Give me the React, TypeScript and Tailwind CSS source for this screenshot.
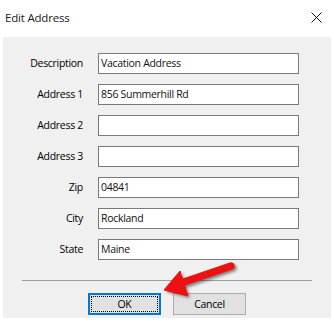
import React from "react";

const fields = [
  { label: "Description", value: "Vacation Address" },
  { label: "Address 1", value: "856 Summerhill Rd" },
  { label: "Address 2", value: "" },
  { label: "Address 3", value: "" },
  { label: "Zip", value: "04841" },
  { label: "City", value: "Rockland" },
  { label: "State", value: "Maine" },
];

export default function App() {
  return (
    <div
      className="relative w-[334px] h-[325px] bg-white text-black text-[10.5px] tracking-[-0.3px] leading-none"
      style={{ fontFamily: '"Open Sans", "Noto Sans", sans-serif' }}
    >
      {/* title bar */}
      <div className="h-[37px] flex items-center justify-between pl-[5px] pr-[12px]">
        <span className="text-[11.5px] tracking-[-0.2px] text-[#1a1a1a] mt-[-2px]">Edit Address</span>
        <svg width="11" height="11" viewBox="0 0 11 11" className="mt-[-2px]">
          <path d="M0.5 0.5 L10.5 10.5 M10.5 0.5 L0.5 10.5" stroke="#111" strokeWidth="1" />
        </svg>
      </div>

      {/* dialog body */}
      <div className="mx-[3px] h-[281px] bg-[#f0f0f0] pt-[16px]">
        <div className="flex flex-col gap-[10px]">
          {fields.map((f) => (
            <div key={f.label} className="flex items-center">
              <div className="w-[81px] text-right pr-[1px]">{f.label}</div>
              <div className="ml-[14px] w-[201px] h-[21px] bg-white border border-[#7a7a7a] flex items-center pl-[2px] text-[#111]">
                {f.value}
              </div>
            </div>
          ))}
        </div>

        <div className="mt-[20px] mx-[19px] h-px bg-[#a0a0a0]" />

        <div className="mt-[12px] flex justify-center gap-[12px]">
          <div className="w-[73px] h-[22px] bg-[#e1e1e1] border-2 border-[#0078d7] p-[1px]">
            <div className="w-full h-full border border-dotted border-black flex items-center justify-center">
              OK
            </div>
          </div>
          <div className="w-[73px] h-[22px] bg-[#e1e1e1] border border-[#adadad] flex items-center justify-center">
            Cancel
          </div>
        </div>
      </div>

      {/* red arrow callout */}
      <svg className="absolute left-0 top-0" width="334" height="325" viewBox="0 0 334 325">
        <defs>
          <filter id="sh" x="-20%" y="-20%" width="140%" height="140%">
            <feGaussianBlur stdDeviation="1.5" />
          </filter>
        </defs>
        <g transform="translate(2 2)" opacity="0.55" filter="url(#sh)">
          <path d="M184 282 L231 266" stroke="#222" strokeWidth="7.5" strokeLinecap="round" />
          <path d="M164 290 L180 271 L188 296 Z" fill="#222" />
        </g>
        <path d="M184 282 L231 266" stroke="#ee1111" strokeWidth="7.5" strokeLinecap="round" />
        <path d="M164 290 L180 271 L188 296 Z" fill="#ee1111" stroke="#ee1111" strokeLinejoin="round" />
      </svg>
    </div>
  );
}
